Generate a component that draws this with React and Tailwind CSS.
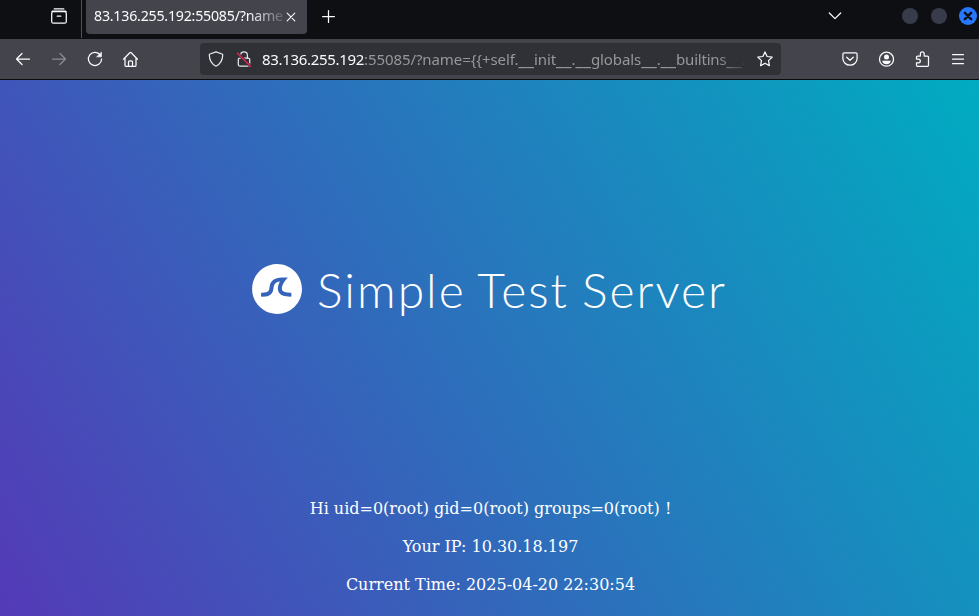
import React from 'react';

function Icon({ children, className = '', size = 16 }) {
  return (
    <svg
      width={size}
      height={size}
      viewBox="0 0 16 16"
      fill="none"
      stroke="currentColor"
      strokeWidth="1.25"
      strokeLinecap="round"
      strokeLinejoin="round"
      className={`shrink-0 ${className}`}
    >
      {children}
    </svg>
  );
}

function Dunder() {
  return <span className="text-[17.4px] leading-none tracking-normal">__</span>;
}

function TabStrip() {
  return (
    <div className="flex h-[39px] items-start bg-[#0e0f13]">
      <div className="flex h-[38px] w-[82px] items-start border-r border-[#515257] pt-2 pl-[51px]">
        <Icon className="text-[#fbfbfe]">
          <path d="M3.2 .9h9.6" />
          <rect x=".7" y="3.6" width="14.6" height="11.6" rx="1.8" />
          <path d="M1 3.6l.8-.6h12.4l.8.6M6.2 8.2h3.6" />
        </Icon>
      </div>
      <div className="ml-1 flex h-[34px] w-[221px] items-center rounded-b bg-[#44454c] pl-2">
        <span className="w-[189px] overflow-hidden pb-0.5 text-[14.2px] tracking-[-0.22px] whitespace-nowrap [mask-image:linear-gradient(to_right,black_155px,transparent_196px)]">
          83.136.255.192:55085/?name
        </span>
        <Icon size={16} className="-mt-px">
          <path d="M4.2 4.2l7.6 7.6M11.8 4.2l-7.6 7.6" strokeWidth="1.1" />
        </Icon>
      </div>
      <Icon className="mt-2 ml-[13px]">
        <path d="M8.5 2.6v11.800M2.600 8.500h11.800" />
      </Icon>
      <Icon className="mt-2 ml-[491px]">
        <path d="M2.3 5l5.7 5.6L13.7 5" />
      </Icon>
      <div className="mt-2 ml-[59px] size-4 rounded-full bg-[#383c4a]" />
      <div className="mt-2 ml-[13px] size-4 rounded-full bg-[#383c4a]" />
      <div className="mt-[7px] ml-3 flex size-[18px] shrink-0 items-center justify-center rounded-full bg-[#2777ff] text-[#0e0f13]">
        <Icon size={10}>
          <path d="M3 3l10 10M13 3L3 13" strokeWidth="4" />
        </Icon>
      </div>
    </div>
  );
}

function Toolbar() {
  return (
    <div className="flex h-[41px] items-center border-b border-[#0c0c0d] bg-[#44454c]">
      <Icon className="ml-[15px]">
        <path d="M14.5 8H1.5M7 2.5L1.5 8 7 13.5" />
      </Icon>
      <Icon className="ml-5 text-[#8b8b90]">
        <path d="M1.5 8h13M9 2.5L14.5 8 9 13.5" />
      </Icon>
      <Icon className="ml-5">
        <path d="M13.4 4.1A6.6 6.6 0 1 0 14.6 8" />
        <path d="M14.4 1.5v4.3h-4.4z" fill="currentColor" strokeWidth=".7" />
      </Icon>
      <Icon className="ml-[19px]">
        <path d="M1.500 8.200L7.800 1.800a1 1 0 0 1 1.400 0L15.500 8.200M3 7v7.200a1.200 1.200 0 0 0 1.200 1.200h8.600a1.200 1.200 0 0 0 1.200-1.200V7M6.500 15.200v-4.200a1.200 1.200 0 0 1 1.200-1.200h1.600a1.200 1.200 0 0 1 1.200 1.200v4.200" />
      </Icon>
      <div className="ml-[62px] flex h-8 w-[581px] items-center rounded bg-[#303136]">
        <Icon className="ml-2 text-[#e6e6e9]">
          <path d="M8 .8l6 2.2c.5.2.7.5.7 1C14.6 9.600 12 13.200 8 15.200 4 13.200 1.400 9.600 1.300 4c0-.5.2-.8.7-1z" />
        </Icon>
        <Icon className="ml-3 text-[#e6e6e9]">
          <path d="M4.600 7V4.200a3.400 3.400 0 0 1 6.800 0V7" />
          <rect x="2.300" y="7" width="11.400" height="8" rx="1.500" />
          <path d="M1.500 2.200l13 13" stroke="#303136" strokeWidth="3" />
          <path d="M1.500 2.200l13 13" stroke="#e22850" strokeWidth="1.500" />
        </Icon>
        <span className="ml-[10px] w-[486px] overflow-hidden text-[15px] tracking-[-0.08px] whitespace-nowrap text-[#97979b] [mask-image:linear-gradient(to_right,black_455px,transparent_488px)]">
          <span className="tracking-[-0.32px] text-[#fbfbfe]">83.136.255.192</span>
          :55085/?name={'{{'}+self.<Dunder />init<Dunder />.<Dunder />globals<Dunder />.<Dunder />
          <span className="tracking-[-0.2px]">builtins</span><Dunder />.
        </span>
        <Icon className="ml-[9px]">
          <path d="M8 .9l2.100 4.600 5.100.6-3.700 3.500.9 5.100L8 12.300l-4.400 2.400.9-5.100L.8 6.100l5.100-.6z" />
        </Icon>
      </div>
      <Icon className="ml-[61px]">
        <path d="M2.300 1.900h11.400a1.400 1.400 0 0 1 1.400 1.400v4.100a7.100 6.800 0 0 1-14.200 0V3.300a1.400 1.400 0 0 1 1.400-1.400zM4.700 6.200L8 9.300l3.300-3.100" />
      </Icon>
      <Icon className="ml-5">
        <circle cx="8.500" cy="8.200" r="7" />
        <circle cx="8.500" cy="6" r="2.500" fill="currentColor" stroke="none" />
        <path d="M4.300 9.700h8.400c0 2-1.800 3.600-4.200 3.600s-4.200-1.600-4.200-3.600z" fill="currentColor" stroke="none" />
      </Icon>
      <Icon className="ml-5">
        <path d="M2.500 8V6a1 1 0 0 1 1-1h2.900V2.800a1.900 1.900 0 0 1 3.800 0V5h3.300a1 1 0 0 1 1 1v8.300a1 1 0 0 1-1 1h-10a1 1 0 0 1-1-1v-2.500h1.900a1.900 1.900 0 0 0 0-3.800z" />
      </Icon>
      <Icon className="ml-5">
        <path d="M2.500 3.500h11M2.500 8h11M2.500 12.500h11" />
      </Icon>
    </div>
  );
}

function WaveLogo() {
  return (
    <svg viewBox="0 0 500 500" className="mr-[15px] size-[50px] shrink-0" fill="#fff">
      <path d="M250.4,0.8C112.7,0.8,1,112.4,1,250.2c0,137.7,111.7,249.4,249.4,249.4c137.7,0,249.4-111.7,249.4-249.4C499.8,112.4,388.1,0.8,250.4,0.8z M383.8,326.3c-62,0-101.4-14.1-117.6-46.3c-17.1-34.1-2.3-75.4,13.2-104.1c-22.4,3-38.4,9.2-47.8,18.3c-11.2,10.9-13.6,26.7-16.3,45c-3.1,20.8-6.6,44.4-25.3,62.4c-19.8,19.1-51.6,26.9-100.2,24.6l1.8-39.7c35.9,1.6,59.7-2.9,70.8-13.6c8.9-8.6,11.1-22.9,13.5-39.6c6.3-42,14.8-99.4,141.4-99.4h41L333,166c-12.6,16-45.4,68.2-31.2,96.2c9.2,18.3,41.5,25.6,91.2,24.2l1.1,39.8C390.5,326.2,387.1,326.3,383.8,326.3z" />
    </svg>
  );
}

export default function App() {
  return (
    <div className="flex h-[616px] w-[979px] flex-col overflow-hidden">
      <header className="font-['Noto_Sans',sans-serif] text-[#fbfbfe]">
        <TabStrip />
        <Toolbar />
      </header>
      <main className="flex flex-1 flex-col items-center bg-[linear-gradient(60deg,#543ab7_0%,#00acc1_100%)] text-white">
        <div className="mt-[180px] flex h-[58px] items-center">
          <WaveLogo />
          <h1 className="pt-0.5 font-['Lato',sans-serif] text-[48px] leading-[58px] font-light tracking-[2px] whitespace-nowrap [word-spacing:-2px]">
            Simple Test Server
          </h1>
        </div>
        <div className="mt-[181px] flex flex-col gap-[19px] pl-0.5 text-center font-['DejaVu_Serif',serif] text-[16px] leading-[19px]">
          <p>Hi uid=0(root) gid=0(root) groups=0(root) !</p>
          <p>Your IP: 10.30.18.197</p>
          <p>Current Time: 2025-04-20 22:30:54</p>
        </div>
      </main>
    </div>
  );
}
